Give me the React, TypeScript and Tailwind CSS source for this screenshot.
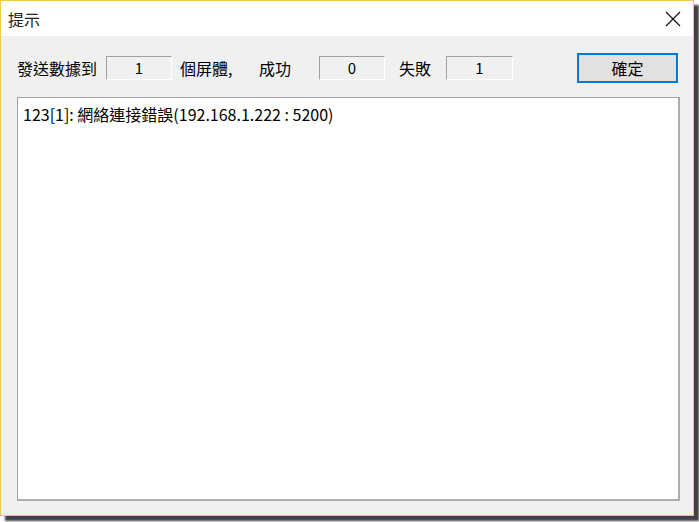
import React from "react";

const font = { fontFamily: '"Noto Sans CJK TC", "Noto Sans", sans-serif' };

// read-only counter box, sunken look
const CountBox = ({ value, w }: { value: string; w: string }) => (
  <div
    className={`${w} h-[24px] flex items-center justify-center border border-[#a0a0a0] border-r-white border-b-white bg-[#f0f0f0] text-[15px] text-black`}
  >
    {value}
  </div>
);

const App = () => {
  return (
    <div className="w-[699px] h-[522px] bg-white overflow-hidden" style={font}>
      <div className="w-[694px] h-[516px] flex flex-col border border-[#efc94f] shadow-[5px_5px_2px_rgba(0,0,0,0.75)]">
        {/* title bar */}
        <div className="h-[35px] shrink-0 bg-white flex items-center pl-[7px] pr-[12px]">
          <span className="text-[16px] leading-none text-[#222]">提示</span>
          <svg
            className="ml-auto"
            width="16"
            height="16"
            viewBox="0 0 16 16"
            fill="none"
            stroke="#111"
            strokeWidth="1.2"
          >
            <path d="M1 1L15 15M15 1L1 15" />
          </svg>
        </div>

        {/* body */}
        <div className="flex-1 flex flex-col bg-[#f0f0f0] pl-[16px] pr-[13px] pb-[14px]">
          <div className="mt-[17px] h-[30px] flex items-center text-[16px] text-black">
            <span className="w-[89px] leading-none">發送數據到</span>
            <CountBox value="1" w="w-[66px]" />
            <span className="ml-[8px] w-[79px] leading-none">個屏體,</span>
            <span className="w-[60px] leading-none">成功</span>
            <CountBox value="0" w="w-[66px]" />
            <span className="ml-[14px] w-[47px] leading-none">失敗</span>
            <CountBox value="1" w="w-[67px]" />
            <button className="ml-auto mr-[2px] w-[101px] h-[30px] border-2 border-[#0078d7] bg-[#e1e1e1] text-[16px] leading-none text-black">
              確定
            </button>
          </div>

          <div className="mt-[14px] flex-1 bg-white border border-[#a0a0a0] border-b-2 border-r-2 border-b-[#a9adb2] border-r-[#a9adb2] px-[5px] pt-[6px]">
            <div className="text-[16px] leading-[20px] text-black">
              123[1]: 網絡連接錯誤(192.168.1.222 : 5200)
            </div>
          </div>
        </div>
      </div>
    </div>
  );
};

export default App;
